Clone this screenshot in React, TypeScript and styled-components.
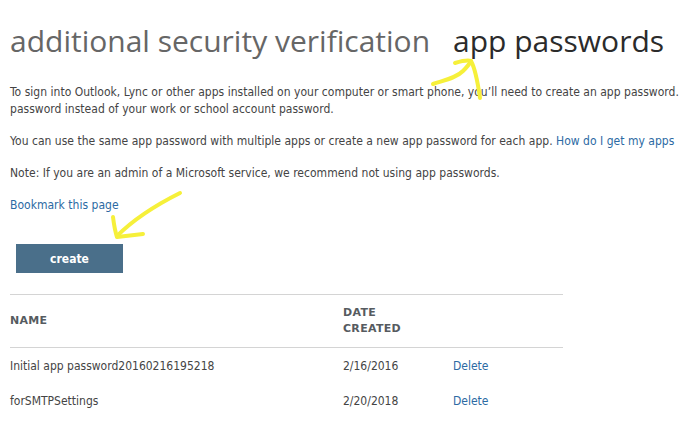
import React from "react";
import styled, { createGlobalStyle } from "styled-components";

const GlobalStyle = createGlobalStyle`
  html, body { margin: 0; padding: 0; background: #ffffff; overflow: hidden; }
  body { width: 680px; height: 429px; }
`;

const Page = styled.div`
  position: relative;
  width: 680px;
  height: 429px;
  overflow: hidden;
  padding-left: 10px;
  box-sizing: border-box;
  font-family: "DejaVu Sans Condensed", "DejaVu Sans", Tahoma, sans-serif;
  font-size: 12px;
  color: #444444;
`;

const TitleRow = styled.h1`
  margin: 21px 0 0 0;
  display: flex;
  gap: 23px;
  font-family: "Open Sans", "Segoe UI", sans-serif;
  font-weight: 400;
  font-size: 30px;
  line-height: 40px;
  white-space: nowrap;
`;

const TitlePart = styled.span<{ $active?: boolean }>`
  color: ${(p) => (p.$active ? "#2b2b2b" : "#666666")};
`;

const Para = styled.p`
  margin: 0 0 15px 0;
  line-height: 17px;
  white-space: nowrap;
  letter-spacing: 0.02px;
`;

const Intro = styled(Para)`
  margin-top: 23px;
`;

const Link = styled.a`
  color: #2c6aa3;
  text-decoration: none;
`;

const CreateButton = styled.button`
  display: block;
  margin: 30px 0 0 6px;
  width: 107px;
  height: 29px;
  border: none;
  background: #4a6f8a;
  color: #ffffff;
  font-family: "DejaVu Sans Condensed", "DejaVu Sans", Tahoma, sans-serif;
  font-size: 12px;
  font-weight: 700;
  padding: 0;
`;

const Table = styled.div`
  margin-top: 21px;
  width: 553px;
  border-top: 1px solid #d4d4d4;
`;

const Row = styled.div<{ $head?: boolean }>`
  display: grid;
  grid-template-columns: 333px 110px 1fr;
  align-items: center;
  padding: ${(p) => (p.$head ? "10px 0 10px" : "10px 0 8px")};
  border-bottom: ${(p) => (p.$head ? "1px solid #d4d4d4" : "none")};
  line-height: ${(p) => (p.$head ? "16px" : "17px")};
`;

const HeadCell = styled.div`
  font-family: "DejaVu Sans", sans-serif;
  font-weight: 700;
  font-size: 11px;
  letter-spacing: 0.3px;
  color: #565b60;
`;

const Cell = styled.div`
  color: #444444;
`;

const Scribble = styled.svg`
  position: absolute;
  left: 0;
  top: 0;
  pointer-events: none;
`;

const rows = [
  { name: "Initial app password20160216195218", date: "2/16/2016" },
  { name: "forSMTPSettings", date: "2/20/2018" },
];

export default function App() {
  return (
    <Page>
      <GlobalStyle />
      <TitleRow>
        <TitlePart>additional security verification</TitlePart>
        <TitlePart $active>app passwords</TitlePart>
      </TitleRow>
      <Intro>
        To sign into Outlook, Lync or other apps installed on your computer or smart phone, you’ll need to create an app password.
        <br />
        password instead of your work or school account password.
      </Intro>
      <Para>
        You can use the same app password with multiple apps or create a new app password for each app.{" "}
        <Link href="#">How do I get my apps</Link>
      </Para>
      <Para>Note: If you are an admin of a Microsoft service, we recommend not using app passwords.</Para>
      <Para>
        <Link href="#">Bookmark this page</Link>
      </Para>
      <CreateButton>create</CreateButton>
      <Table>
        <Row $head>
          <HeadCell>NAME</HeadCell>
          <HeadCell>
            DATE
            <br />
            CREATED
          </HeadCell>
          <HeadCell />
        </Row>
        {rows.map((r) => (
          <Row key={r.name}>
            <Cell>{r.name}</Cell>
            <Cell>{r.date}</Cell>
            <Cell>
              <Link href="#">Delete</Link>
            </Cell>
          </Row>
        ))}
      </Table>
      <Scribble width="680" height="429" viewBox="0 0 680 429">
        <g fill="none" stroke="#f6f03a" strokeWidth="4" strokeLinecap="round" strokeLinejoin="round">
          <path d="M433 84 C 445 80, 456 78, 463 71 C 468 66, 470 63, 471 61" />
          <path d="M455 63 C 462 61, 468 60, 471 61 C 476 70, 478 84, 480 98" />
          <path d="M180 193 C 160 203, 135 218, 117 236" />
          <path d="M113 217 C 114 225, 115 231, 117 237 C 126 236, 135 235, 143 234" />
        </g>
      </Scribble>
    </Page>
  );
}
